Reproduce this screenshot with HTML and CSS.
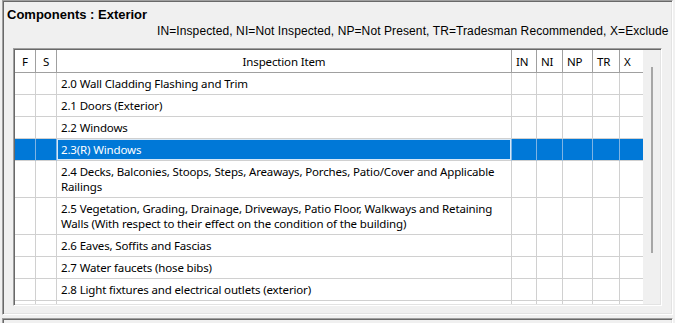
FILE: index.html
```html
<!DOCTYPE html>
<html lang="en">

<head>
    <meta charset="UTF-8">
    <title>Components : Exterior</title>
    <link rel="stylesheet" href="styles.css">
</head>

<body>
    <div class="panel">
        <div class="panel__title">Components : Exterior</div>
        <div class="panel__legend">IN=Inspected, NI=Not Inspected, NP=Not Present, TR=Tradesman Recommended, X=Exclude</div>

        <div class="grid">
            <div class="grid__table">
                <div class="row row--head">
                    <div class="cell cell--center">F</div>
                    <div class="cell cell--center">S</div>
                    <div class="cell cell--center">Inspection Item</div>
                    <div class="cell">IN</div>
                    <div class="cell">NI</div>
                    <div class="cell">NP</div>
                    <div class="cell">TR</div>
                    <div class="cell">X</div>
                </div>
                <div class="row">
                    <div class="cell"></div><div class="cell"></div>
                    <div class="cell item">2.0 Wall Cladding Flashing and Trim</div>
                    <div class="cell"></div><div class="cell"></div><div class="cell"></div><div class="cell"></div><div class="cell"></div>
                </div>
                <div class="row">
                    <div class="cell"></div><div class="cell"></div>
                    <div class="cell item">2.1 Doors (Exterior)</div>
                    <div class="cell"></div><div class="cell"></div><div class="cell"></div><div class="cell"></div><div class="cell"></div>
                </div>
                <div class="row">
                    <div class="cell"></div><div class="cell"></div>
                    <div class="cell item">2.2 Windows</div>
                    <div class="cell"></div><div class="cell"></div><div class="cell"></div><div class="cell"></div><div class="cell"></div>
                </div>
                <div class="row row--selected">
                    <div class="cell"></div><div class="cell"></div>
                    <div class="cell item item--focus">2.3(R) Windows</div>
                    <div class="cell"></div><div class="cell"></div><div class="cell"></div><div class="cell"></div><div class="cell"></div>
                </div>
                <div class="row">
                    <div class="cell"></div><div class="cell"></div>
                    <div class="cell item">2.4 Decks, Balconies, Stoops, Steps, Areaways, Porches, Patio/Cover and Applicable<br>Railings</div>
                    <div class="cell"></div><div class="cell"></div><div class="cell"></div><div class="cell"></div><div class="cell"></div>
                </div>
                <div class="row">
                    <div class="cell"></div><div class="cell"></div>
                    <div class="cell item">2.5 Vegetation, Grading, Drainage, Driveways, Patio Floor, Walkways and Retaining<br>Walls (With respect to their effect on the condition of the building)</div>
                    <div class="cell"></div><div class="cell"></div><div class="cell"></div><div class="cell"></div><div class="cell"></div>
                </div>
                <div class="row">
                    <div class="cell"></div><div class="cell"></div>
                    <div class="cell item">2.6 Eaves, Soffits and Fascias</div>
                    <div class="cell"></div><div class="cell"></div><div class="cell"></div><div class="cell"></div><div class="cell"></div>
                </div>
                <div class="row">
                    <div class="cell"></div><div class="cell"></div>
                    <div class="cell item">2.7 Water faucets (hose bibs)</div>
                    <div class="cell"></div><div class="cell"></div><div class="cell"></div><div class="cell"></div><div class="cell"></div>
                </div>
                <div class="row">
                    <div class="cell"></div><div class="cell"></div>
                    <div class="cell item">2.8 Light fixtures and electrical outlets (exterior)</div>
                    <div class="cell"></div><div class="cell"></div><div class="cell"></div><div class="cell"></div><div class="cell"></div>
                </div>
                <!-- next row, mostly scrolled out of view -->
                <div class="row">
                    <div class="cell"></div><div class="cell"></div>
                    <div class="cell item"></div>
                    <div class="cell"></div><div class="cell"></div><div class="cell"></div><div class="cell"></div><div class="cell"></div>
                </div>
            </div>
            <div class="grid__scroll">
                <div class="grid__thumb"></div>
            </div>
        </div>
    </div>

    <div class="panel panel--next"></div>
</body>

</html>
```

FILE: styles.css
```css
* {
  margin: 0;
  padding: 0;
  box-sizing: border-box;
}

body {
  background-color: #f0f0f0;
  font-family: 'Noto Sans', 'Open Sans', sans-serif;
  font-size: 11.5px;
  letter-spacing: -0.15px;
  color: #000000;
  overflow: hidden;
}

/* sunken 3d box, like a windows panel */
.panel {
  margin-left: 2px;
  width: 671px;
  height: 315px;
  padding: 6px 0 0 4px;
  border: 1px solid;
  border-color: #a0a0a0 #ffffff #ffffff #a0a0a0;
  box-shadow: inset 1px 1px #696969, inset -1px -1px #e3e3e3;
}

.panel--next {
  margin-top: 3px;
  height: 40px;
}

.panel__title {
  font: bold 13px/15px 'Liberation Sans', Arial, sans-serif;
  letter-spacing: 0;
}

.panel__legend {
  font: 12px/14px 'Liberation Sans', Arial, sans-serif;
  letter-spacing: 0.1px;
  margin-top: 2px;
  padding-left: 150px;
  white-space: nowrap;
  overflow: hidden;
}

.grid {
  display: flex;
  margin: 10px 0 0 6px;
  width: 649px;
  height: 258px;
  border: 1px solid;
  border-color: #a0a0a0 #ffffff #ffffff #a0a0a0;
  box-shadow: inset 1px 1px #696969, inset -1px -1px #e3e3e3;
  padding: 1px;
}

.grid__table {
  width: 629px;
  height: 254px;
  overflow: hidden;
  background-color: #ffffff;
}

.grid__scroll {
  width: 17px;
  background-color: #f0f0f0;
}

.grid__thumb {
  margin: 17px 0 0 8px;
  width: 2px;
  height: 186px;
  background-color: #a6a6a6;
}

.row {
  display: grid;
  grid-template-columns: 21px 21px 455px 25px 26px 30px 27px 24px;
}

.cell {
  border-right: 1px solid #d0d0d0;
  border-bottom: 1px solid #d0d0d0;
  padding: 3px 4px;
  line-height: 15px;
  min-height: 22px;
  white-space: nowrap;
}

.cell--center {
  text-align: center;
  padding-left: 0;
  padding-right: 0;
}

.row--head .cell {
  padding-top: 4px;
  padding-bottom: 3px;
  border-right-color: #a0a0a0;
  border-bottom-color: #a0a0a0;
}

.row--selected {
  background-color: #0078d7;
  color: #ffffff;
}

.row--selected .cell {
  border-right-color: #7fb4e4;
  border-bottom-color: #d0d0d0;
}

.item--focus {
  box-shadow: inset 0 0 0 1px #d6e8f8;
}
```
